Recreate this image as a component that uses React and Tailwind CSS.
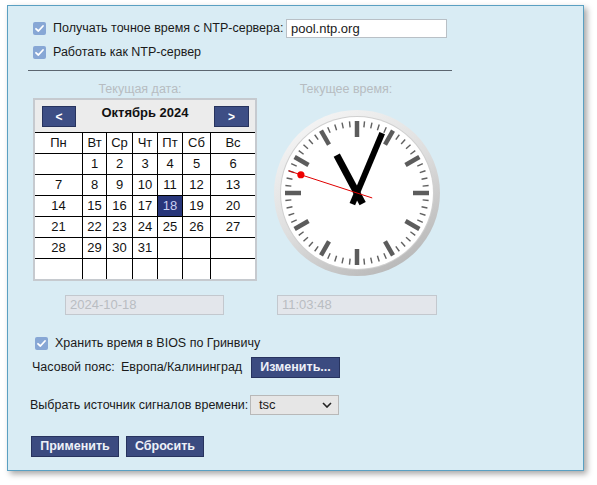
import React from "react";

const font = { fontFamily: '"Liberation Sans", Arial, sans-serif' };

function Check() {
  return (
    <div className="w-[13px] h-[13px] rounded-[2px] bg-[#87a7d5] flex items-center justify-center shrink-0">
      <svg width="11" height="11" viewBox="0 0 11 11">
        <path d="M2 5.8 L4.4 8 L9 3" fill="none" stroke="#ffffff" strokeWidth="1.8" strokeLinecap="round" strokeLinejoin="round" />
      </svg>
    </div>
  );
}

function Btn({ children, w }) {
  return (
    <div className={`${w} h-[21px] bg-[#3b4b80] border border-[#27335e] text-[#eef1f8] font-bold text-[12.5px] flex items-center justify-center shrink-0`}>
      {children}
    </div>
  );
}

const cols = "grid grid-cols-[47px_24px_26px_25px_25px_28px_45px]";
const days = ["Пн", "Вт", "Ср", "Чт", "Пт", "Сб", "Вс"];
const weeks = [
  ["", "1", "2", "3", "4", "5", "6"],
  ["7", "8", "9", "10", "11", "12", "13"],
  ["14", "15", "16", "17", "18", "19", "20"],
  ["21", "22", "23", "24", "25", "26", "27"],
  ["28", "29", "30", "31", "", "", ""],
  ["", "", "", "", "", "", ""],
];

function Calendar() {
  return (
    <div className="w-[224px] h-[183px] bg-[#c6cacf] p-[2px]">
      <div className="h-[32px] bg-[#ececec] flex items-start justify-between pl-[7px] pr-[6px] pt-[6px]">
        <div className="w-[34px] h-[21px] bg-[#3d4e85] border border-[#27335e] text-white font-bold text-[12px] flex items-center justify-center">&lt;</div>
        <div className="font-bold text-[13px] text-[#111] leading-[14px]">Октябрь 2024</div>
        <div className="w-[35px] h-[21px] bg-[#3d4e85] border border-[#27335e] text-white font-bold text-[12px] flex items-center justify-center">&gt;</div>
      </div>
      <div className="bg-white">
        <div className={`${cols} h-[21px] border-t border-black`}>
          {days.map((d, i) => (
            <div key={i} className={`${i ? "border-l border-black" : ""} flex items-center justify-center text-[13px] text-[#111]`}>{d}</div>
          ))}
        </div>
        {weeks.map((w, r) => (
          <div key={r} className={`${cols} h-[21px] border-t border-black`}>
            {w.map((d, i) => {
              const sel = d === "18";
              return (
                <div key={i} className={`${i ? "border-l border-black" : ""} ${sel ? "bg-[#28367a] text-[#c8d1f2]" : "text-[#111]"} flex items-center justify-center text-[13px]`}>{d}</div>
              );
            })}
          </div>
        ))}
      </div>
    </div>
  );
}

function Clock() {
  const c = 85;
  const ticks = [];
  for (let i = 0; i < 60; i++) {
    const a = (i * 6 * Math.PI) / 180;
    const hour = i % 5 === 0;
    const r1 = hour ? 56 : 66;
    const r2 = 72;
    ticks.push(
      <line key={i} x1={c + r1 * Math.sin(a)} y1={c - r1 * Math.cos(a)} x2={c + r2 * Math.sin(a)} y2={c - r2 * Math.cos(a)}
        stroke={hour ? "#5c5c5c" : "#606060"} strokeWidth={hour ? 4.5 : 1.4} />
    );
  }
  const hand = (deg, tail, len, w, color) => {
    const a = (deg * Math.PI) / 180;
    return (
      <line x1={c - tail * Math.sin(a)} y1={c + tail * Math.cos(a)} x2={c + len * Math.sin(a)} y2={c - len * Math.cos(a)} stroke={color} strokeWidth={w} />
    );
  };
  const sa = (288 * Math.PI) / 180;
  return (
    <svg width="170" height="170" viewBox="0 0 170 170">
      <defs>
        <linearGradient id="bz" x1="0.2" y1="0" x2="0.8" y2="1">
          <stop offset="0" stopColor="#f6f6f6" />
          <stop offset="0.5" stopColor="#dedede" />
          <stop offset="1" stopColor="#b4b4b4" />
        </linearGradient>
      </defs>
      <circle cx={c} cy={c} r="83" fill="url(#bz)" />
      <circle cx={c} cy={c} r="77" fill="#d0d0d0" />
      <circle cx={c} cy={c} r="76" fill="#ffffff" />
      {ticks}
      {hand(331.9, 12, 43, 7, "#000")}
      {hand(22.8, 12, 65, 6, "#000")}
      {hand(288, 16, 72, 1, "#e00000")}
      <circle cx={c + 59 * Math.sin(sa)} cy={c - 59 * Math.cos(sa)} r="3.6" fill="#ee0000" />
    </svg>
  );
}

export default function App() {
  return (
    <div className="w-[597px] h-[485px] bg-white pt-[5px] pl-[7px] text-[12.5px] text-[#1a1a1a]" style={font}>
      <div className="w-[577px] h-[466px] border border-[#5aa0c2] bg-[#d9ecf4] shadow-[3px_3px_6px_rgba(0,0,0,0.35)] flex flex-col">
        <div className="mt-[13px] ml-[25px] h-[19px] flex items-center">
          <Check />
          <span className="ml-[7px] w-[233px] whitespace-nowrap">Получать точное время с NTP-сервера:</span>
          <div className="w-[161px] h-[19px] bg-white border border-[#b9c0c6] pl-[4px] flex items-center text-[13px]">pool.ntp.org</div>
        </div>
        <div className="mt-[8px] ml-[25px] h-[13px] flex items-center">
          <Check />
          <span className="ml-[7px]">Работать как NTP-сервер</span>
        </div>
        <div className="mt-[11px] ml-[20px] w-[424px] h-px bg-[#5c6670]" />
        <div className="flex">
          <div className="ml-[25px] w-[224px] flex flex-col">
            <div className="mt-[10px] h-[16px] leading-[16px] text-center pr-[10px] text-[#b7bcc1]">Текущая дата:</div>
            <div className="mt-[1px]"><Calendar /></div>
            <div className="mt-[14px] ml-[32px] w-[159px] h-[20px] bg-[#e3e6eb] border border-[#c3c8ce] text-[#b9bdc2] pl-[4px] flex items-center text-[13px]">2024-10-18</div>
          </div>
          <div className="ml-[15px] w-[170px] flex flex-col">
            <div className="mt-[10px] h-[16px] leading-[16px] text-center pr-[22px] text-[#b7bcc1]">Текущее время:</div>
            <div className="mt-[11px] h-[170px]"><Clock /></div>
            <div className="mt-[17px] ml-[5px] w-[160px] h-[20px] bg-[#e3e6eb] border border-[#c3c8ce] text-[#b9bdc2] pl-[4px] flex items-center text-[13px]">11:03:48</div>
          </div>
        </div>
        <div className="mt-[22px] ml-[27px] h-[13px] flex items-center">
          <Check />
          <span className="ml-[7px]">Хранить время в BIOS по Гринвичу</span>
        </div>
        <div className="mt-[7px] ml-[24px] h-[21px] flex items-center">
          <span className="w-[89px] whitespace-nowrap">Часовой пояс:</span>
          <span className="w-[130px] whitespace-nowrap">Европа/Калининград</span>
          <Btn w="w-[89px]">Изменить...</Btn>
        </div>
        <div className="mt-[17px] ml-[22px] h-[20px] flex items-center">
          <span className="w-[220px] whitespace-nowrap">Выбрать источник сигналов времени:</span>
          <div className="w-[89px] h-[20px] bg-[#e6e6e6] border border-[#b8b8b8] flex items-center justify-between pl-[8px] pr-[6px]">
            <span className="text-[13px]">tsc</span>
            <svg width="10" height="6" viewBox="0 0 10 6">
              <path d="M1 1 L5 5 L9 1" fill="none" stroke="#222" strokeWidth="1.6" />
            </svg>
          </div>
        </div>
        <div className="mt-[21px] ml-[23px] flex gap-[7px]">
          <Btn w="w-[88px]">Применить</Btn>
          <Btn w="w-[78px]">Сбросить</Btn>
        </div>
      </div>
    </div>
  );
}
